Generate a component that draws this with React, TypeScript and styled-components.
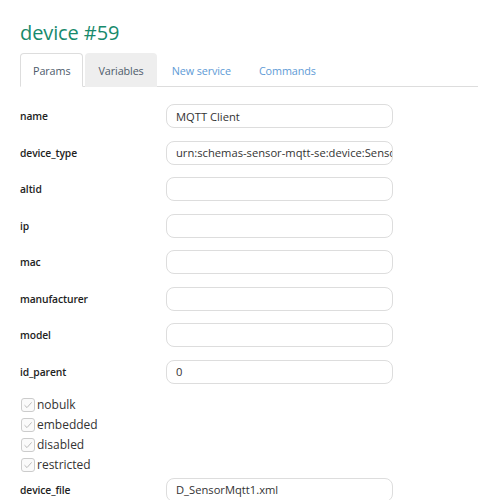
import { Fragment } from "react";
import styled, { createGlobalStyle } from "styled-components";

const GlobalStyle = createGlobalStyle`
  html, body {
    margin: 0;
    padding: 0;
    background: #fff;
    font-family: "Open Sans", "Liberation Sans", sans-serif;
    color: #222;
  }
`;

const Page = styled.div`
  width: 478px;
  height: 500px;
  overflow: hidden;
  padding: 19px 0 0 20px;
  box-sizing: border-box;
`;

const Title = styled.h1`
  margin: 0;
  font-size: 20px;
  font-weight: 400;
  line-height: 28px;
  letter-spacing: -0.1px;
  color: #178a6c;
`;

const TabBar = styled.div`
  display: flex;
  margin-top: 6px;
  border-bottom: 1px solid #ddd;
  height: 33px;
`;

const Tab = styled.div<{ $active?: boolean; $muted?: boolean }>`
  display: flex;
  align-items: center;
  padding: 0 12px;
  margin-right: 2px;
  margin-bottom: -1px;
  font-size: 10.8px;
  letter-spacing: -0.1px;
  border: 1px solid ${(p) => (p.$active ? "#ddd" : "transparent")};
  border-bottom-color: ${(p) => (p.$active ? "#fff" : "transparent")};
  border-radius: 4px 4px 0 0;
  background: ${(p) => (p.$active ? "#fff" : p.$muted ? "#eee" : "transparent")};
  color: ${(p) => (p.$active || p.$muted ? "#4d5b6b" : "#5e9bd6")};
`;

const Form = styled.div<{ $tight?: boolean }>`
  display: grid;
  grid-template-columns: 146px 227px;
  row-gap: 12.5px;
  margin-top: ${(p) => (p.$tight ? 0 : 17)}px;
  align-items: center;
`;

const Label = styled.label`
  font-size: 10.3px;
  font-weight: 600;
  letter-spacing: -0.1px;
  color: #222;
`;

const Field = styled.div`
  height: 24px;
  box-sizing: border-box;
  border: 1px solid #ddd;
  border-radius: 8px;
  padding: 0 9px;
  display: flex;
  align-items: center;
  font-size: 11.2px;
  color: #333;
  white-space: nowrap;
  overflow: hidden;
`;

const Checks = styled.div`
  display: flex;
  flex-direction: column;
  margin: 11px 0 3px;
`;

const CheckRow = styled.div`
  display: flex;
  align-items: center;
  height: 20px;
  font-size: 12px;
  color: #333;
`;

const Box = styled.span`
  width: 12px;
  height: 12px;
  margin: 0 2px 0 1px;
  border: 1px solid #ccc;
  border-radius: 3px;
  background: #fafafa;
  display: flex;
  align-items: center;
  justify-content: center;
`;

const fields = [
  ["name", "MQTT Client"],
  ["device_type", "urn:schemas-sensor-mqtt-se:device:SensorMqtt:1"],
  ["altid", ""],
  ["ip", ""],
  ["mac", ""],
  ["manufacturer", ""],
  ["model", ""],
  ["id_parent", "0"],
];

const flags = ["nobulk", "embedded", "disabled", "restricted"];

export default function App() {
  return (
    <Page>
      <GlobalStyle />
      <Title>device #59</Title>
      <TabBar>
        <Tab $active>Params</Tab>
        <Tab $muted>Variables</Tab>
        <Tab>New service</Tab>
        <Tab>Commands</Tab>
      </TabBar>
      <Form>
        {fields.map(([k, v]) => (
          <Fragment key={k}>
            <Label>{k}</Label>
            <Field>{v}</Field>
          </Fragment>
        ))}
      </Form>
      <Checks>
        {flags.map((f) => (
          <CheckRow key={f}>
            <Box>
              <svg width="10" height="10" viewBox="0 0 10 10">
                <path d="M1.5 5.2 L4 7.6 L8.6 2.4" fill="none" stroke="#bbb" strokeWidth="1" />
              </svg>
            </Box>
            {f}
          </CheckRow>
        ))}
      </Checks>
      <Form $tight>
        <Label>device_file</Label>
        <Field>D_SensorMqtt1.xml</Field>
      </Form>
    </Page>
  );
}
